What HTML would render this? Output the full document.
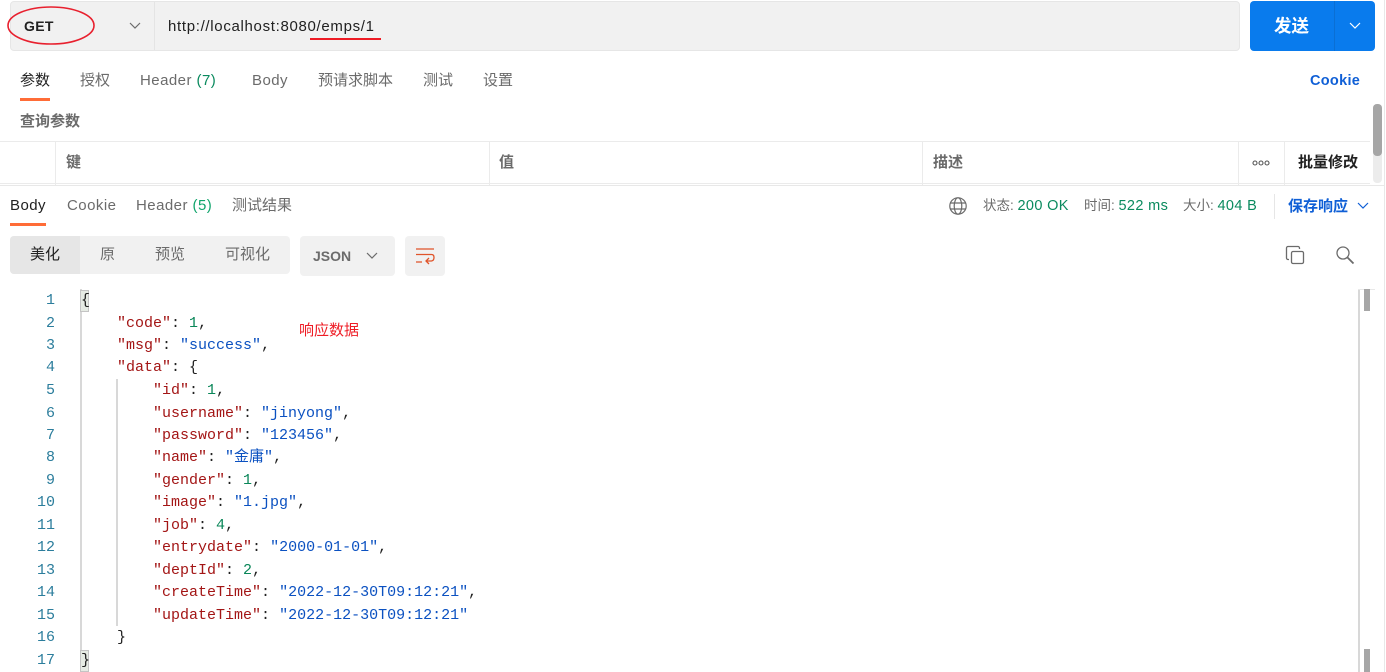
<!DOCTYPE html>
<html>
<head>
<meta charset="utf-8">
<style>
html,body{margin:0;padding:0;background:#fff}
#p{position:relative;width:1386px;height:672px;overflow:hidden;background:#fff;font-family:"Liberation Sans","Noto Sans CJK SC",sans-serif;font-size:15px;color:#6b6b6b}
#p>*{position:absolute}
.t{white-space:nowrap;line-height:20px}
.g{color:#0a8a5e}
.l{font-size:15px;letter-spacing:.45px}
.m{font-family:"Liberation Mono","Noto Sans CJK SC",monospace;font-size:15px;line-height:22px;white-space:pre;height:22px;color:#212121;left:81px}
.n{font-family:"Liberation Mono",monospace;font-size:15px;line-height:22px;color:#2b7d9c;text-align:right;left:20px;width:35px;height:22px}
.k{color:#a31515}.s{color:#0b51c1}.d{color:#098658}
.st{font-size:13.500px}
.st span{font-size:14.500px;letter-spacing:.35px}
</style>
</head>
<body>
<div id="p">
<div style="left:10px;top:1px;width:1230px;height:50px;background:#f1f1f1;border:1px solid #e6e6e6;border-radius:4px;box-sizing:border-box"></div>
<div style="left:154px;top:2px;width:1px;height:48px;background:#e4e4e4"></div>
<div class="t" style="left:24px;top:16px;font-weight:bold;color:#212121;font-size:14px;letter-spacing:.3px">GET</div>
<svg style="left:128px;top:21px" width="14" height="10" viewBox="0 0 14 10"><path d="M2 2l5 5 5-5" fill="none" stroke="#6b6b6b" stroke-width="1.2"/></svg>
<div class="t" style="left:168px;top:17px;color:#212121;font-size:15px;letter-spacing:.68px">http://localhost:8080/emps/1</div>
<svg style="left:0;top:0" width="110" height="50" viewBox="0 0 110 50"><ellipse cx="51" cy="25.500" rx="43" ry="18.500" fill="none" stroke="#e8202e" stroke-width="1.600"/></svg>
<div style="left:310px;top:38px;width:71px;height:2px;background:#ee1c25"></div>

<div style="left:1250px;top:1px;width:125px;height:50px;background:#097bed;border-radius:4px"></div>
<div style="left:1334px;top:1px;width:1px;height:50px;background:#0a6fd4"></div>
<div class="t" style="left:1274px;top:16px;font-size:17.500px;font-weight:bold;color:#fff">发送</div>
<svg style="left:1348px;top:21px" width="14" height="10" viewBox="0 0 14 10"><path d="M2 2l5 5 5-5" fill="none" stroke="#fff" stroke-width="1.200"/></svg>
<div style="left:1384px;top:0;width:1px;height:672px;background:#e8e8e8"></div>

<div class="t" style="left:20px;top:71px;color:#212121">参数</div>
<div style="left:20px;top:98px;width:30px;height:3px;background:#ff6c37"></div>
<div class="t" style="left:80px;top:71px">授权</div>
<div class="t l" style="left:140px;top:71px">Header <span class="g">(7)</span></div>
<div class="t l" style="left:252px;top:71px">Body</div>
<div class="t" style="left:318px;top:71px">预请求脚本</div>
<div class="t" style="left:423px;top:71px">测试</div>
<div class="t" style="left:483px;top:71px">设置</div>
<div class="t" style="left:1310px;top:71px;color:#0f5fd6;font-weight:bold;font-size:14.500px;letter-spacing:.3px">Cookie</div>
<div class="t" style="left:20px;top:112px;font-weight:bold">查询参数</div>

<div style="left:0;top:141px;width:1370px;height:1px;background:#ebebeb"></div>
<div style="left:0;top:183px;width:1370px;height:1px;background:#ebebeb"></div>
<div style="left:0;top:185px;width:1384px;height:1px;background:#e8e8e8"></div>
<div style="left:55px;top:142px;width:1px;height:43px;background:#ebebeb"></div>
<div style="left:489px;top:142px;width:1px;height:43px;background:#ebebeb"></div>
<div style="left:922px;top:142px;width:1px;height:43px;background:#ebebeb"></div>
<div style="left:1238px;top:142px;width:1px;height:43px;background:#ebebeb"></div>
<div style="left:1284px;top:142px;width:1px;height:43px;background:#ebebeb"></div>
<div class="t" style="left:66px;top:153px;font-weight:bold">键</div>
<div class="t" style="left:499px;top:153px;font-weight:bold">值</div>
<div class="t" style="left:933px;top:153px;font-weight:bold">描述</div>
<svg style="left:1252px;top:159px" width="18" height="8" viewBox="0 0 18 8"><g fill="none" stroke="#555" stroke-width="1.100"><circle cx="3" cy="4" r="2"/><circle cx="9" cy="4" r="2"/><circle cx="15" cy="4" r="2"/></g></svg>
<div class="t" style="left:1298px;top:153px;font-weight:bold;color:#212121">批量修改</div>
<div style="left:1373px;top:104px;width:9px;height:79px;background:#ececec;border-radius:4px"></div>
<div style="left:1373px;top:104px;width:9px;height:52px;background:#a6a6a6;border-radius:4px"></div>

<div class="t l" style="left:10px;top:196px;color:#212121">Body</div>
<div style="left:10px;top:223px;width:36px;height:3px;background:#ff6c37"></div>
<div class="t l" style="left:67px;top:196px">Cookie</div>
<div class="t l" style="left:136px;top:196px">Header <span class="g" style="color:#12a56d">(5)</span></div>
<div class="t" style="left:232px;top:196px">测试结果</div>

<svg style="left:948px;top:196px" width="20" height="20" viewBox="0 0 20 20"><g fill="none" stroke="#6b6b6b" stroke-width="1.200"><circle cx="10" cy="10" r="8.200"/><ellipse cx="10" cy="10" rx="3.800" ry="8.200"/><path d="M2.500 7h15M2.500 13h15"/></g></svg>
<div class="t st" style="left:983px;top:196px">状态: <span class="g">200 OK</span></div>
<div class="t st" style="left:1084px;top:196px">时间: <span class="g">522 ms</span></div>
<div class="t st" style="left:1183px;top:196px">大小: <span class="g">404 B</span></div>
<div style="left:1274px;top:194px;width:1px;height:25px;background:#e6e6e6"></div>
<div class="t" style="left:1288px;top:197px;color:#0f5fd6;font-weight:bold">保存响应</div>
<svg style="left:1356px;top:201px" width="14" height="10" viewBox="0 0 14 10"><path d="M2 2l5 5 5-5" fill="none" stroke="#0f5fd6" stroke-width="1.200"/></svg>

<div style="left:10px;top:236px;width:280px;height:38px;background:#f1f1f1;border-radius:4px"></div>
<div style="left:10px;top:236px;width:70px;height:38px;background:#e6e6e6;border-radius:4px 0 0 4px"></div>
<div class="t" style="left:30px;top:245px;color:#212121">美化</div>
<div class="t" style="left:100px;top:245px">原</div>
<div class="t" style="left:155px;top:245px">预览</div>
<div class="t" style="left:225px;top:245px">可视化</div>
<div style="left:300px;top:236px;width:95px;height:40px;background:#f1f1f1;border-radius:4px"></div>
<div class="t" style="left:313px;top:246px;font-weight:bold;font-size:14px">JSON</div>
<svg style="left:365px;top:251px" width="14" height="10" viewBox="0 0 14 10"><path d="M2 2l5 5 5-5" fill="none" stroke="#6b6b6b" stroke-width="1.200"/></svg>
<div style="left:405px;top:236px;width:40px;height:40px;background:#f1f1f1;border-radius:4px"></div>
<svg style="left:415px;top:246px" width="20" height="20" viewBox="0 0 20 20"><path d="M1 3h18M1 8.500h15.500q2.500 0 2.500 3t-2.500 3.500h-5M14 12l-3 3 3 3M1 16h6" fill="none" stroke="#e0542a" stroke-width="1.300"/></svg>

<svg style="left:1285px;top:245px" width="20" height="20" viewBox="0 0 20 20"><g fill="none" stroke="#6b6b6b" stroke-width="1.300"><rect x="6.500" y="6.500" width="12" height="12" rx="1.500"/><path d="M4 14.500h-1a1.500 1.500 0 0 1-1.500-1.500v-10a1.500 1.500 0 0 1 1.500-1.500h10a1.500 1.500 0 0 1 1.500 1.500v1"/></g></svg>
<svg style="left:1335px;top:245px" width="20" height="20" viewBox="0 0 20 20"><g fill="none" stroke="#6b6b6b" stroke-width="1.300"><circle cx="8" cy="8" r="6"/><path d="M12.500 12.500l6 6" stroke-width="1.800"/></g></svg>

<div style="left:80px;top:289px;width:2px;height:383px;background:#d8d8d8"></div>
<div style="left:116px;top:379px;width:1.500px;height:247px;background:#d8d8d8"></div>
<div style="left:80px;top:290px;width:9px;height:22px;background:#e6ebe4;border:1px solid #c4c4c4;box-sizing:border-box"></div>
<div style="left:80px;top:650px;width:9px;height:22px;background:#e6ebe4;border:1px solid #c4c4c4;box-sizing:border-box"></div>

<div class="n" style="top:290px">1</div><div class="m" style="top:290px">{</div>
<div class="n" style="top:313px">2</div><div class="m" style="top:313px">    <span class="k">"code"</span>: <span class="d">1</span>,</div>
<div class="n" style="top:335px">3</div><div class="m" style="top:335px">    <span class="k">"msg"</span>: <span class="s">"success"</span>,</div>
<div class="n" style="top:357px">4</div><div class="m" style="top:357px">    <span class="k">"data"</span>: {</div>
<div class="n" style="top:380px">5</div><div class="m" style="top:380px">        <span class="k">"id"</span>: <span class="d">1</span>,</div>
<div class="n" style="top:403px">6</div><div class="m" style="top:403px">        <span class="k">"username"</span>: <span class="s">"jinyong"</span>,</div>
<div class="n" style="top:425px">7</div><div class="m" style="top:425px">        <span class="k">"password"</span>: <span class="s">"123456"</span>,</div>
<div class="n" style="top:447px">8</div><div class="m" style="top:447px">        <span class="k">"name"</span>: <span class="s">"金庸"</span>,</div>
<div class="n" style="top:470px">9</div><div class="m" style="top:470px">        <span class="k">"gender"</span>: <span class="d">1</span>,</div>
<div class="n" style="top:492px">10</div><div class="m" style="top:492px">        <span class="k">"image"</span>: <span class="s">"1.jpg"</span>,</div>
<div class="n" style="top:515px">11</div><div class="m" style="top:515px">        <span class="k">"job"</span>: <span class="d">4</span>,</div>
<div class="n" style="top:537px">12</div><div class="m" style="top:537px">        <span class="k">"entrydate"</span>: <span class="s">"2000-01-01"</span>,</div>
<div class="n" style="top:560px">13</div><div class="m" style="top:560px">        <span class="k">"deptId"</span>: <span class="d">2</span>,</div>
<div class="n" style="top:582px">14</div><div class="m" style="top:582px">        <span class="k">"createTime"</span>: <span class="s">"2022-12-30T09:12:21"</span>,</div>
<div class="n" style="top:605px">15</div><div class="m" style="top:605px">        <span class="k">"updateTime"</span>: <span class="s">"2022-12-30T09:12:21"</span></div>
<div class="n" style="top:627px">16</div><div class="m" style="top:627px">    }</div>
<div class="n" style="top:650px">17</div><div class="m" style="top:650px">}</div>

<div class="t" style="left:299px;top:321px;color:#ee1c25">响应数据</div>

<div style="left:1358px;top:289px;width:2px;height:383px;background:#d8d8d8"></div>
<div style="left:1358px;top:289px;width:17px;height:1px;background:#e8e8e8"></div>
<div style="left:1364px;top:289px;width:6px;height:22px;background:#a6a6a6"></div>
<div style="left:1364px;top:649px;width:6px;height:23px;background:#a6a6a6"></div>
</div>
</body>
</html>
